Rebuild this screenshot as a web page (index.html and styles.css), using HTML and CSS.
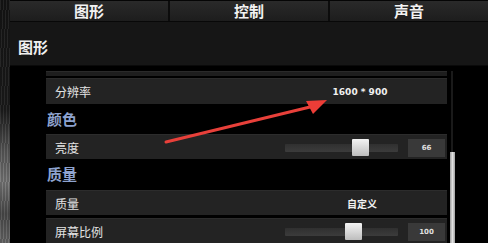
FILE: index.html
```html
<!DOCTYPE html>
<html lang="zh">
<head>
<meta charset="utf-8">
<link rel="stylesheet" href="styles.css">
</head>
<body>
<div class="screen">
  <div class="rock"></div>
  <div class="main">
    <div class="tabs">
      <div class="tab">图形</div>
      <div class="tab">控制</div>
      <div class="tab">声音</div>
    </div>
    <div class="header">图形</div>
    <div class="content">
      <div class="list">
        <div class="stub"></div>
        <div class="row r-res"><span class="label">分辨率</span><span class="value">1600 * 900</span></div>
        <div class="heading h1">颜色</div>
        <div class="row r-bright">
          <span class="label">亮度</span>
          <div class="slider"><div class="track"></div><div class="thumb t66"></div></div>
          <div class="numbox">66</div>
        </div>
        <div class="heading h2">质量</div>
        <div class="row r-q"><span class="label">质量</span><span class="value">自定义</span></div>
        <div class="row r-scale">
          <span class="label">屏幕比例</span>
          <div class="slider"><div class="track"></div><div class="thumb t100"></div></div>
          <div class="numbox">100</div>
        </div>
      </div>
      <div class="scrollbar"><div class="sthumb"></div></div>
    </div>
  </div>
  <svg class="arrow" width="488" height="243" viewBox="0 0 488 243">
    <path d="M166 142 L310 107" stroke="#e8403a" stroke-width="3" stroke-linecap="round" fill="none"/>
    <polygon points="327,100 306,101 313,114" fill="#ec3d37"/>
  </svg>
</div>
</body>
</html>
```
FILE: styles.css
```css
html, body {
  margin: 0;
  padding: 0;
  background: #000;
}
body {
  font-family: "Noto Sans CJK SC", "Noto Sans", sans-serif;
  color: #e6e6e6;
}
.screen {
  position: relative;
  width: 488px;
  height: 243px;
  overflow: hidden;
  display: flex;
  background: #000;
}
.rock {
  width: 10px;
  flex: none;
  background:
    repeating-linear-gradient(93deg, rgba(255,255,255,0.06) 0 1px, rgba(0,0,0,0.15) 1px 3px),
    linear-gradient(180deg, #151515 0%, #1c1c1c 45%, #5a5a5a 62%, #7a7a7a 75%, #4c4c4c 88%, #6a6a6a 100%);
}
.main {
  flex: 1;
  display: flex;
  flex-direction: column;
  min-width: 0;
}
.tabs {
  height: 21px;
  display: flex;
  border-top: 1px solid #050505;
  border-bottom: 1px solid #080808;
  background: linear-gradient(180deg, #2a2a2a 0%, #1d1d1d 100%);
}
.tab {
  width: 160px;
  flex: none;
  text-align: center;
  font-size: 15px;
  font-weight: 700;
  line-height: 20px;
  color: #f2f2f2;
  border-right: 2px solid #0c0c0c;
  box-sizing: border-box;
}
.tab:last-child { border-right: none; flex: 1; }
.header {
  height: 43px;
  background: #161616;
  font-size: 15px;
  font-weight: 700;
  color: #f0f0f0;
  padding-left: 8px;
  line-height: 50px;
  border-bottom: 1px solid #0a0a0a;
}
.content {
  flex: 1;
  display: flex;
  padding-left: 36px;
  padding-top: 5px;
}
.list {
  width: 401px;
  display: flex;
  flex-direction: column;
}
.stub {
  height: 4px;
  background: #1e1e1e;
  border-top: 1px solid #2a2a2a;
  margin-bottom: 2px;
}
.row {
  height: 26px;
  flex: none;
  background: #232323;
  display: flex;
  align-items: center;
  border-top: 1px solid #2c2c2c;
  box-sizing: border-box;
  position: relative;
}
.label {
  padding-left: 9px;
  font-size: 12px;
  color: #e4e4e4;
  width: 140px;
}
.value {
  position: absolute;
  left: 269px;
  width: 90px;
  text-align: center;
  font-family: "DejaVu Sans", "Noto Sans CJK SC", sans-serif;
  font-size: 9px;
  font-weight: 700;
  color: #f0f0f0;
}
.r-q .value {
  font-family: "Noto Sans CJK SC", sans-serif;
  font-size: 10px;
  left: 271px;
}
.heading {
  height: 30px;
  flex: none;
  font-size: 15px;
  font-weight: 700;
  color: #8ea3cf;
  padding-left: 1px;
  line-height: 30px;
  box-sizing: border-box;
}
.h1 { height: 30px; }
.h2 { height: 31px; }
.r-bright { height: 25px; }
.r-q { height: 25px; margin-bottom: 3px; }
.slider {
  position: absolute;
  left: 239px;
  width: 113px;
  height: 18px;
  top: 4px;
}
.track {
  position: absolute;
  left: 0;
  right: 0;
  top: 5px;
  height: 8px;
  background: linear-gradient(180deg, #303030, #3c3c3c);
  border-radius: 1px;
}
.thumb {
  position: absolute;
  top: 0;
  width: 17px;
  height: 17px;
  background: linear-gradient(180deg, #f4f4f4, #bdbdbd);
  border-radius: 1px;
}
.t66 { left: 67px; }
.t100 { left: 60px; }
.numbox {
  position: absolute;
  left: 362px;
  top: 4px;
  width: 37px;
  height: 18px;
  background: #393939;
  font-family: "DejaVu Sans", sans-serif;
  font-size: 7px;
  font-weight: 700;
  color: #e0e0e0;
  text-align: center;
  line-height: 18px;
}
.scrollbar {
  width: 6px;
  margin-left: 2px;
  position: relative;
  background: linear-gradient(90deg, transparent 2px, #1a1a1a 2px, #1a1a1a 4px, transparent 4px);
}
.sthumb {
  position: absolute;
  left: 1px;
  width: 5px;
  top: 81px;
  bottom: 0;
  background: linear-gradient(90deg, #9a9a9a, #e0e0e0, #a0a0a0);
}
.arrow {
  position: absolute;
  left: 0;
  top: 0;
  pointer-events: none;
}
```
